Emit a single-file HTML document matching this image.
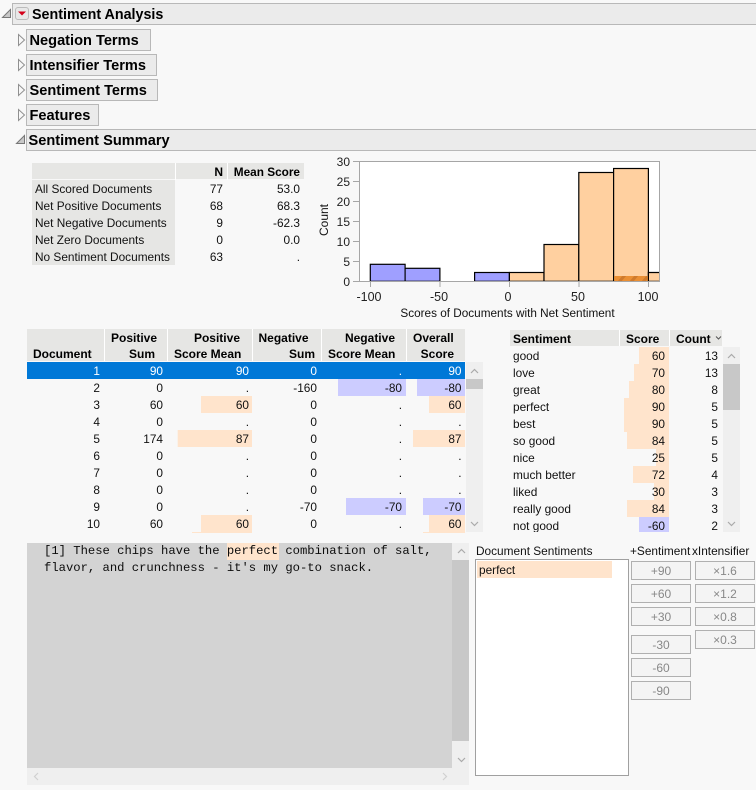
<!DOCTYPE html>
<html><head><meta charset="utf-8"><title>Sentiment Analysis</title>
<style>
html,body{margin:0;padding:0;background:#f8f8f8;width:756px;height:790px;overflow:hidden}
svg{display:block}
text{font-family:"Liberation Sans",sans-serif;font-size:11.85px;fill:#111}
.b{font-weight:bold;font-size:12px;fill:#000}
.h{font-weight:bold;font-size:14.3px;fill:#000}
.s{font-size:14.6px}
.e{text-anchor:end}
.c{text-anchor:middle}
.m{font-family:"Liberation Mono",monospace;font-size:12.2px;fill:#0c0c0c}
.w{fill:#fff}
.g{fill:#888;font-size:12px;text-anchor:middle}
.a{font-size:12.5px;fill:#222}
.y{font-size:12px;fill:#222}
.bar{stroke:#000;stroke-width:1.2}
.btn{fill:#f4f4f4;stroke:#b0b0b0;stroke-width:1}
.arr{fill:none;stroke:#aaa;stroke-width:1.2}
</style></head><body>
<svg width="756" height="790" viewBox="0 0 756 790" xmlns="http://www.w3.org/2000/svg">
<defs><clipPath id="hc"><rect x="614.2" y="276" width="33.6" height="5"/></clipPath></defs>
<rect width="756" height="790" fill="#f8f8f8"/>

<!-- Outline headers -->
<g fill="#ebebeb" stroke="#b8b8b8">
<rect x="12.5" y="3.5" width="750" height="21"/>
<rect x="26.5" y="29.5" width="124" height="21"/>
<rect x="26.5" y="54.5" width="130" height="21"/>
<rect x="26.5" y="79.5" width="131" height="21"/>
<rect x="26.5" y="104.5" width="72" height="21"/>
<rect x="26.5" y="129.5" width="736" height="21"/>
</g>
<path d="M2.5 17.5L10.5 9.5V17.5Z" fill="#c8c8c8" stroke="#777"/>
<rect x="15.5" y="7.5" width="13" height="12" rx="2.5" fill="#e8e8e8" stroke="#bbb"/>
<path d="M18 11.5H26L22 15.5Z" fill="#d4001a"/>
<text class="h" x="32" y="19">Sentiment Analysis</text>
<g fill="#f8f8f8" stroke="#909090">
<path d="M18.5 34.5L24.5 40L18.5 45.5Z"/>
<path d="M18.5 59.5L24.5 65L18.5 70.5Z"/>
<path d="M18.5 84.5L24.5 90L18.5 95.5Z"/>
<path d="M18.5 109.5L24.5 115L18.5 120.5Z"/>
</g>
<path d="M16.5 143.5L24.5 135.5V143.5Z" fill="#c8c8c8" stroke="#777"/>
<text class="h s" x="29.5" y="45">Negation Terms</text>
<text class="h s" x="29.5" y="70">Intensifier Terms</text>
<text class="h s" x="29.5" y="95">Sentiment Terms</text>
<text class="h s" x="29.5" y="120">Features</text>
<text class="h s" x="28.5" y="145">Sentiment Summary</text>

<!-- Summary table -->
<rect x="32" y="163" width="272" height="16" fill="#e6e6e4"/>
<rect x="32" y="180" width="143" height="85" fill="#e6e6e4"/>
<rect x="175" y="163" width="1" height="17" fill="#fff"/>
<rect x="227" y="163" width="1" height="17" fill="#fff"/>
<text class="b e" x="223" y="176">N</text>
<text class="b e" x="300" y="176" style="font-size:11.8px">Mean Score</text>
<text x="35" y="193">All Scored Documents</text><text class="e" x="223" y="193">77</text><text class="e" x="300" y="193">53.0</text>
<text x="35" y="210">Net Positive Documents</text><text class="e" x="223" y="210">68</text><text class="e" x="300" y="210">68.3</text>
<text x="35" y="227">Net Negative Documents</text><text class="e" x="223" y="227">9</text><text class="e" x="300" y="227">-62.3</text>
<text x="35" y="244">Net Zero Documents</text><text class="e" x="223" y="244">0</text><text class="e" x="300" y="244">0.0</text>
<text x="35" y="261">No Sentiment Documents</text><text class="e" x="223" y="261">63</text><text class="e" x="300" y="261">.</text>

<!-- Histogram -->
<rect x="359.5" y="161.5" width="300" height="120" fill="#fff" stroke="#a6a6a6"/>
<g class="bar">
<rect x="370.3" y="264.3" width="34.8" height="17" fill="#9f9fff"/>
<rect x="405.1" y="268.3" width="34.8" height="13" fill="#9f9fff"/>
<rect x="474.6" y="272.5" width="34.8" height="8.8" fill="#9f9fff"/>
<rect x="509.4" y="272.5" width="34.6" height="8.8" fill="#ffd0a0"/>
<rect x="544" y="244.5" width="34.8" height="36.8" fill="#ffd0a0"/>
<rect x="578.8" y="172.5" width="34.8" height="108.8" fill="#ffd0a0"/>
<rect x="613.6" y="168.5" width="34.8" height="112.8" fill="#ffd0a0"/>
<path d="M659 272.5H648.4V281.3H659" fill="#ffd0a0"/>
</g>
<rect x="614.2" y="276" width="33.6" height="5" fill="#ea8f34"/>
<g clip-path="url(#hc)"><path d="M619 282L625 275M631 282L637 275M643 282L649 275" stroke="#cf7a2c" stroke-width="3" fill="none"/></g>
<path d="M359.5 161.5H659.5M659.5 161.5V281.5M359.5 161.5V281.5M359.5 281.5H659.5" fill="none" stroke="#a6a6a6"/>
<path d="M353 161.5H359M353 181.5H359M353 201.5H359M353 221.5H359M353 241.5H359M353 261.5H359M353 281.5H359M370.5 281V287M440 281V287M509.5 281V287M579 281V287M648.5 281V287" stroke="#a6a6a6" fill="none"/>
<text class="e y" x="350" y="166">30</text><text class="e y" x="350" y="186">25</text><text class="e y" x="350" y="206">20</text><text class="e y" x="350" y="226">15</text><text class="e y" x="350" y="246">10</text><text class="e y" x="350" y="266">5</text><text class="e y" x="350" y="286">0</text>
<text class="c a" x="369" y="301">-100</text><text class="c a" x="439" y="301">-50</text><text class="c a" x="508" y="301">0</text><text class="c a" x="578" y="301">50</text><text class="c a" x="648" y="301">100</text>
<text class="c" x="507.5" y="317" style="font-size:11.75px">Scores of Documents with Net Sentiment</text>
<text class="c" transform="translate(328 220) rotate(-90)" x="0" y="0" style="font-size:12px">Count</text>

<!-- Document table -->
<rect x="27" y="329" width="438" height="32" fill="#e6e6e4"/>
<g fill="#fff"><rect x="104" y="329" width="1" height="32"/><rect x="167" y="329" width="1" height="32"/><rect x="252" y="329" width="1" height="32"/><rect x="321" y="329" width="1" height="32"/><rect x="406" y="329" width="1" height="32"/></g>
<text class="b" x="33" y="358">Document</text>
<text class="b" x="111" y="342">Positive</text><text class="b e" x="155" y="358">Sum</text>
<text class="b e" x="240" y="342">Positive</text><text class="b" x="174" y="358">Score Mean</text>
<text class="b" x="258.5" y="342">Negative</text><text class="b e" x="315" y="358">Sum</text>
<text class="b e" x="395" y="342">Negative</text><text class="b" x="328" y="358">Score Mean</text>
<text class="b" x="413" y="342">Overall</text><text class="b e" x="454" y="358">Score</text>

<rect x="27" y="362" width="438" height="17" fill="#0078d7"/>
<g fill="#ccccff">
<rect x="338" y="379" width="68" height="17"/><rect x="417" y="379" width="48" height="17"/>
<rect x="346" y="498" width="60" height="17"/><rect x="423" y="498" width="42" height="17"/>
</g>
<g fill="#ffe4cc">
<rect x="201" y="396" width="51" height="17"/><rect x="429" y="396" width="36" height="17"/>
<rect x="177.7" y="430" width="74.3" height="17"/><rect x="413" y="430" width="52" height="17"/>
<rect x="201" y="515" width="51" height="17"/><rect x="429" y="515" width="36" height="17"/>
<rect x="192" y="532" width="60" height="1"/><rect x="423" y="532" width="42" height="1"/>
</g>
<text class="e w" x="100" y="375">1</text><text class="e w" x="163" y="375">90</text><text class="e w" x="249" y="375">90</text><text class="e w" x="317" y="375">0</text><text class="e w" x="402" y="375">.</text><text class="e w" x="461.5" y="375">90</text>
<text class="e" x="100" y="392">2</text><text class="e" x="163" y="392">0</text><text class="e" x="249" y="392">.</text><text class="e" x="317" y="392">-160</text><text class="e" x="402" y="392">-80</text><text class="e" x="461.5" y="392">-80</text>
<text class="e" x="100" y="409">3</text><text class="e" x="163" y="409">60</text><text class="e" x="249" y="409">60</text><text class="e" x="317" y="409">0</text><text class="e" x="402" y="409">.</text><text class="e" x="461.5" y="409">60</text>
<text class="e" x="100" y="426">4</text><text class="e" x="163" y="426">0</text><text class="e" x="249" y="426">.</text><text class="e" x="317" y="426">0</text><text class="e" x="402" y="426">.</text><text class="e" x="461.5" y="426">.</text>
<text class="e" x="100" y="443">5</text><text class="e" x="163" y="443">174</text><text class="e" x="249" y="443">87</text><text class="e" x="317" y="443">0</text><text class="e" x="402" y="443">.</text><text class="e" x="461.5" y="443">87</text>
<text class="e" x="100" y="460">6</text><text class="e" x="163" y="460">0</text><text class="e" x="249" y="460">.</text><text class="e" x="317" y="460">0</text><text class="e" x="402" y="460">.</text><text class="e" x="461.5" y="460">.</text>
<text class="e" x="100" y="477">7</text><text class="e" x="163" y="477">0</text><text class="e" x="249" y="477">.</text><text class="e" x="317" y="477">0</text><text class="e" x="402" y="477">.</text><text class="e" x="461.5" y="477">.</text>
<text class="e" x="100" y="494">8</text><text class="e" x="163" y="494">0</text><text class="e" x="249" y="494">.</text><text class="e" x="317" y="494">0</text><text class="e" x="402" y="494">.</text><text class="e" x="461.5" y="494">.</text>
<text class="e" x="100" y="511">9</text><text class="e" x="163" y="511">0</text><text class="e" x="249" y="511">.</text><text class="e" x="317" y="511">-70</text><text class="e" x="402" y="511">-70</text><text class="e" x="461.5" y="511">-70</text>
<text class="e" x="100" y="528">10</text><text class="e" x="163" y="528">60</text><text class="e" x="249" y="528">60</text><text class="e" x="317" y="528">0</text><text class="e" x="402" y="528">.</text><text class="e" x="461.5" y="528">60</text>
<rect x="466" y="362" width="17" height="170" fill="#efefef"/>
<rect x="466" y="379" width="17" height="10" fill="#c8c8c8"/>
<path class="arr" d="M471 373L474.5 369.5L478 373M471 522L474.5 525.5L478 522"/>

<!-- Sentiment table -->
<rect x="510" y="330" width="212" height="16" fill="#e6e6e4"/>
<rect x="619" y="330" width="1" height="16" fill="#fff"/><rect x="669" y="330" width="1" height="16" fill="#fff"/>
<text class="b" x="513" y="343">Sentiment</text><text class="b" x="626" y="343">Score</text><text class="b" x="676" y="343">Count</text>
<path d="M716 336.5L718.5 339L721 336.5" fill="none" stroke="#555"/>
<g fill="#ffe4cc">
<rect x="639" y="347" width="30" height="17"/><rect x="634" y="364" width="35" height="17"/><rect x="629" y="381" width="40" height="17"/><rect x="624" y="398" width="45" height="17"/><rect x="624" y="415" width="45" height="17"/><rect x="627" y="432" width="42" height="17"/><rect x="656" y="449" width="13" height="17"/><rect x="633" y="466" width="36" height="17"/><rect x="654" y="483" width="15" height="17"/><rect x="627" y="500" width="42" height="17"/>
</g>
<rect x="639" y="517" width="30" height="15" fill="#ccccff"/>
<text x="513" y="360">good</text><text class="e" x="665" y="360">60</text><text class="e" x="718" y="360">13</text>
<text x="513" y="377">love</text><text class="e" x="665" y="377">70</text><text class="e" x="718" y="377">13</text>
<text x="513" y="394">great</text><text class="e" x="665" y="394">80</text><text class="e" x="718" y="394">8</text>
<text x="513" y="411">perfect</text><text class="e" x="665" y="411">90</text><text class="e" x="718" y="411">5</text>
<text x="513" y="428">best</text><text class="e" x="665" y="428">90</text><text class="e" x="718" y="428">5</text>
<text x="513" y="445">so good</text><text class="e" x="665" y="445">84</text><text class="e" x="718" y="445">5</text>
<text x="513" y="462">nice</text><text class="e" x="665" y="462">25</text><text class="e" x="718" y="462">5</text>
<text x="513" y="479">much better</text><text class="e" x="665" y="479">72</text><text class="e" x="718" y="479">4</text>
<text x="513" y="496">liked</text><text class="e" x="665" y="496">30</text><text class="e" x="718" y="496">3</text>
<text x="513" y="513">really good</text><text class="e" x="665" y="513">84</text><text class="e" x="718" y="513">3</text>
<text x="513" y="530">not good</text><text class="e" x="665" y="530">-60</text><text class="e" x="718" y="530">2</text>
<rect x="510" y="532" width="212" height="4" fill="#f8f8f8"/>
<rect x="723" y="347" width="17" height="185" fill="#efefef"/>
<rect x="723" y="364" width="17" height="46" fill="#c8c8c8"/>
<path class="arr" d="M728 358L731.5 354.5L735 358M728 522L731.5 525.5L735 522"/>

<!-- Document text -->
<rect x="27" y="543" width="425" height="225" fill="#d3d3d3"/>
<rect x="227" y="543" width="52" height="17" fill="#ffe4cc"/>
<text class="m" x="44" y="554" xml:space="preserve">[1] These chips have the perfect combination of salt,</text>
<text class="m" x="44" y="571" xml:space="preserve">flavor, and crunchness - it's my go-to snack.</text>
<rect x="452" y="543" width="17" height="242" fill="#efefef"/>
<rect x="452" y="560" width="17" height="181" fill="#c8c8c8"/>
<rect x="27" y="768" width="425" height="17" fill="#efefef"/>
<path class="arr" d="M458 553L461.5 549.5L465 553M458 758L461.5 761.5L465 758"/>
<path d="M38 773L34.5 776.5L38 780M443 773L446.5 776.5L443 780" fill="none" stroke="#d0d0d0" stroke-width="1.2"/>

<!-- Document Sentiments -->
<text x="476" y="555">Document Sentiments</text>
<text x="630" y="555">+Sentiment</text>
<text x="692" y="555">xIntensifier</text>
<rect x="475.5" y="559.5" width="153" height="216" fill="#fff" stroke="#a0a0a0"/>
<rect x="477" y="561" width="135" height="17" fill="#ffe4cc"/>
<text x="479" y="574">perfect</text>
<g>
<rect class="btn" x="631.5" y="561.5" width="59" height="18"/><text class="g" x="661" y="575">+90</text>
<rect class="btn" x="631.5" y="584.5" width="59" height="18"/><text class="g" x="661" y="598">+60</text>
<rect class="btn" x="631.5" y="607.5" width="59" height="18"/><text class="g" x="661" y="621">+30</text>
<rect class="btn" x="631.5" y="635.5" width="59" height="18"/><text class="g" x="661" y="649">-30</text>
<rect class="btn" x="631.5" y="658.5" width="59" height="18"/><text class="g" x="661" y="672">-60</text>
<rect class="btn" x="631.5" y="681.5" width="59" height="18"/><text class="g" x="661" y="695">-90</text>
<rect class="btn" x="695.5" y="561.5" width="59" height="18"/><text class="g" x="725" y="575">×1.6</text>
<rect class="btn" x="695.5" y="584.5" width="59" height="18"/><text class="g" x="725" y="598">×1.2</text>
<rect class="btn" x="695.5" y="607.5" width="59" height="18"/><text class="g" x="725" y="621">×0.8</text>
<rect class="btn" x="695.5" y="630.5" width="59" height="18"/><text class="g" x="725" y="644">×0.3</text>
</g>
</svg>
</body></html>
